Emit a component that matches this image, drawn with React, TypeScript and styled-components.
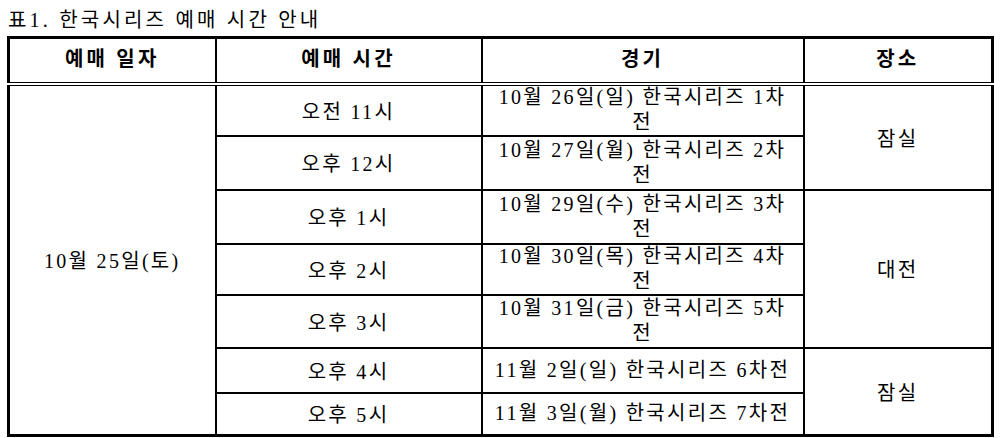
import React from "react";
import styled, { createGlobalStyle } from "styled-components";

const GlobalStyle = createGlobalStyle`
  html, body { margin: 0; padding: 0; background: #fff; }
  body {
    font-family: "Liberation Serif", "Noto Sans CJK KR", serif;
    color: #000;
  }
`;

const Page = styled.div`
  padding: 7px 0 0 7px;
`;

const Caption = styled.div`
  font-size: 20px;
  line-height: 26px;
  letter-spacing: 3.2px;
  margin: 0 0 3px 1px;
  white-space: nowrap;
`;

const Table = styled.table`
  border-collapse: collapse;
  table-layout: fixed;
  width: 984px;
  border: 3px solid #000;
  font-size: 20px;
  letter-spacing: 2.3px;
`;

const Row = styled.tr<{ $h: number }>`
  height: ${(p) => p.$h}px;
`;

const HeadCell = styled.th`
  border: 2px solid #000;
  border-bottom: 4px double #000;
  font-weight: bold;
  letter-spacing: 3.2px;
  text-align: center;
  vertical-align: middle;
  padding: 0 0 6px;
`;

const Cell = styled.td`
  border: 2px solid #000;
  text-align: center;
  vertical-align: middle;
  padding: 0 11px;
  font-weight: normal;
`;

const GameText = styled.div`
  line-height: 25px;
  margin: -2px 0;
  word-break: break-all;
`;

const widths = [207, 266, 322, 189];

const times = ["오전 11시", "오후 12시", "오후 1시", "오후 2시", "오후 3시", "오후 4시", "오후 5시"];
const games = [
  "10월 26일(일) 한국시리즈 1차전",
  "10월 27일(월) 한국시리즈 2차전",
  "10월 29일(수) 한국시리즈 3차전",
  "10월 30일(목) 한국시리즈 4차전",
  "10월 31일(금) 한국시리즈 5차전",
  "11월 2일(일) 한국시리즈 6차전",
  "11월 3일(월) 한국시리즈 7차전",
];
const heights = [52, 54, 54, 51, 53, 45, 43];
const venues: Record<number, { name: string; span: number }> = {
  0: { name: "잠실", span: 2 },
  2: { name: "대전", span: 3 },
  5: { name: "잠실", span: 2 },
};

export default function App() {
  return (
    <>
      <GlobalStyle />
      <Page>
        <Caption>표1. 한국시리즈 예매 시간 안내</Caption>
        <Table>
          <colgroup>
            {widths.map((w, i) => (
              <col key={i} style={{ width: w }} />
            ))}
          </colgroup>
          <thead>
            <Row $h={46}>
              <HeadCell>예매 일자</HeadCell>
              <HeadCell>예매 시간</HeadCell>
              <HeadCell>경기</HeadCell>
              <HeadCell>장소</HeadCell>
            </Row>
          </thead>
          <tbody>
            {times.map((t, i) => (
              <Row key={i} $h={heights[i]}>
                {i === 0 && <Cell rowSpan={7}>10월 25일(토)</Cell>}
                <Cell>{t}</Cell>
                <Cell>
                  <GameText>{games[i]}</GameText>
                </Cell>
                {venues[i] && <Cell rowSpan={venues[i].span}>{venues[i].name}</Cell>}
              </Row>
            ))}
          </tbody>
        </Table>
      </Page>
    </>
  );
}
